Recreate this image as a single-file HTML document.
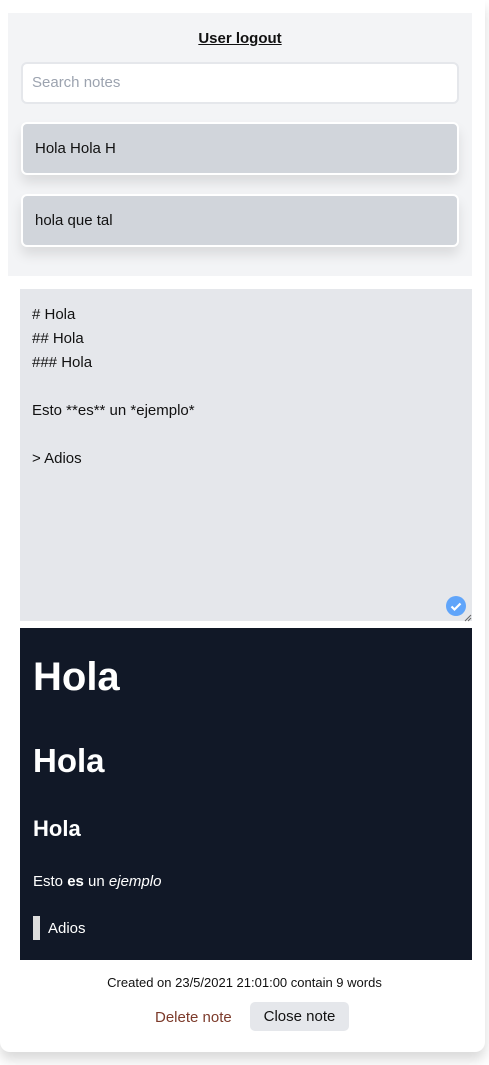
<!DOCTYPE html><html><head><style>
body{margin:0;width:489px;height:1065px;background:#fff;font-family:"Liberation Sans",sans-serif;overflow:hidden;position:relative}
.card{position:absolute;left:0;top:0;width:485px;height:1052px;background:#fff;border-radius:0 0 10px 10px;box-shadow:0 8px 12px rgba(0,0,0,.15)}
.top{position:absolute;left:8px;top:13px;width:464px;height:263px;background:#f3f4f6}
.logout{position:absolute;top:17px;left:0;width:464px;text-align:center;font-weight:bold;font-size:15px;text-decoration:underline;color:#111}
.search{position:absolute;left:13px;top:49px;background:#fff;border:2px solid #e5e7eb;border-radius:6px;box-sizing:border-box;width:438px;color:#9ca3af;font-size:15px;line-height:38px;padding-left:9px;height:42px}
.note{position:absolute;left:13px;width:438px;height:53px;background:#d1d5db;border:2px solid #fff;border-radius:6px;box-sizing:border-box;font-size:15px;color:#111;padding-left:12px;line-height:49px;box-shadow:0 8px 12px rgba(0,0,0,.1)}
.ta{position:absolute;left:20px;top:289px;width:452px;height:332px;background:#e5e7eb;font-size:15px;color:#111;box-sizing:border-box;padding:14px 12px;line-height:24px;white-space:pre}
.pv{position:absolute;left:20px;top:628px;width:452px;height:332px;background:#111827;color:#fff}
.pv div{position:absolute;left:13px;font-weight:bold}
.meta{position:absolute;top:975px;width:489px;text-align:center;font-size:13px;color:#111}
</style></head><body>
<div class="card"></div>
<div class="top">
<div class="logout">User logout</div>
<div class="search">Search notes</div>
<div class="note" style="top:109px">Hola Hola H</div>
<div class="note" style="top:181px">hola que tal</div>
</div>
<div class="ta"># Hola
## Hola
### Hola

Esto **es** un *ejemplo*

&gt; Adios</div>
<svg style="position:absolute;left:446px;top:596px" width="26" height="26"><circle cx="10" cy="10" r="10" fill="#60a5fa"/><path d="M5.5 10.5l3 3 6-6" stroke="#fff" stroke-width="2.2" fill="none"/><path d="M19 25l6-6M22 25l3-3" stroke="#666" stroke-width="1"/></svg>
<div class="pv">
<div style="top:27px;font-size:40px">Hola</div>
<div style="top:114px;font-size:33px">Hola</div>
<div style="top:188px;font-size:22px">Hola</div>
<div style="top:245px;font-size:15px;font-weight:normal">Esto <b>es</b> un <i>ejemplo</i></div>
<div style="top:288px;width:7px;height:24px;background:#ddd"></div>
<div style="top:292px;left:28px;font-size:15px;font-weight:normal">Adios</div>
</div>
<div class="meta">Created on 23/5/2021 21:01:00 contain 9 words</div>
<div style="position:absolute;left:155px;top:1009px;font-size:15px;color:#7c3a2a">Delete note</div>
<div style="position:absolute;left:250px;top:1002px;width:99px;height:29px;background:#e5e7eb;border-radius:5px;font-size:15px;line-height:29px;text-align:center;color:#111">Close note</div>
</body></html>
